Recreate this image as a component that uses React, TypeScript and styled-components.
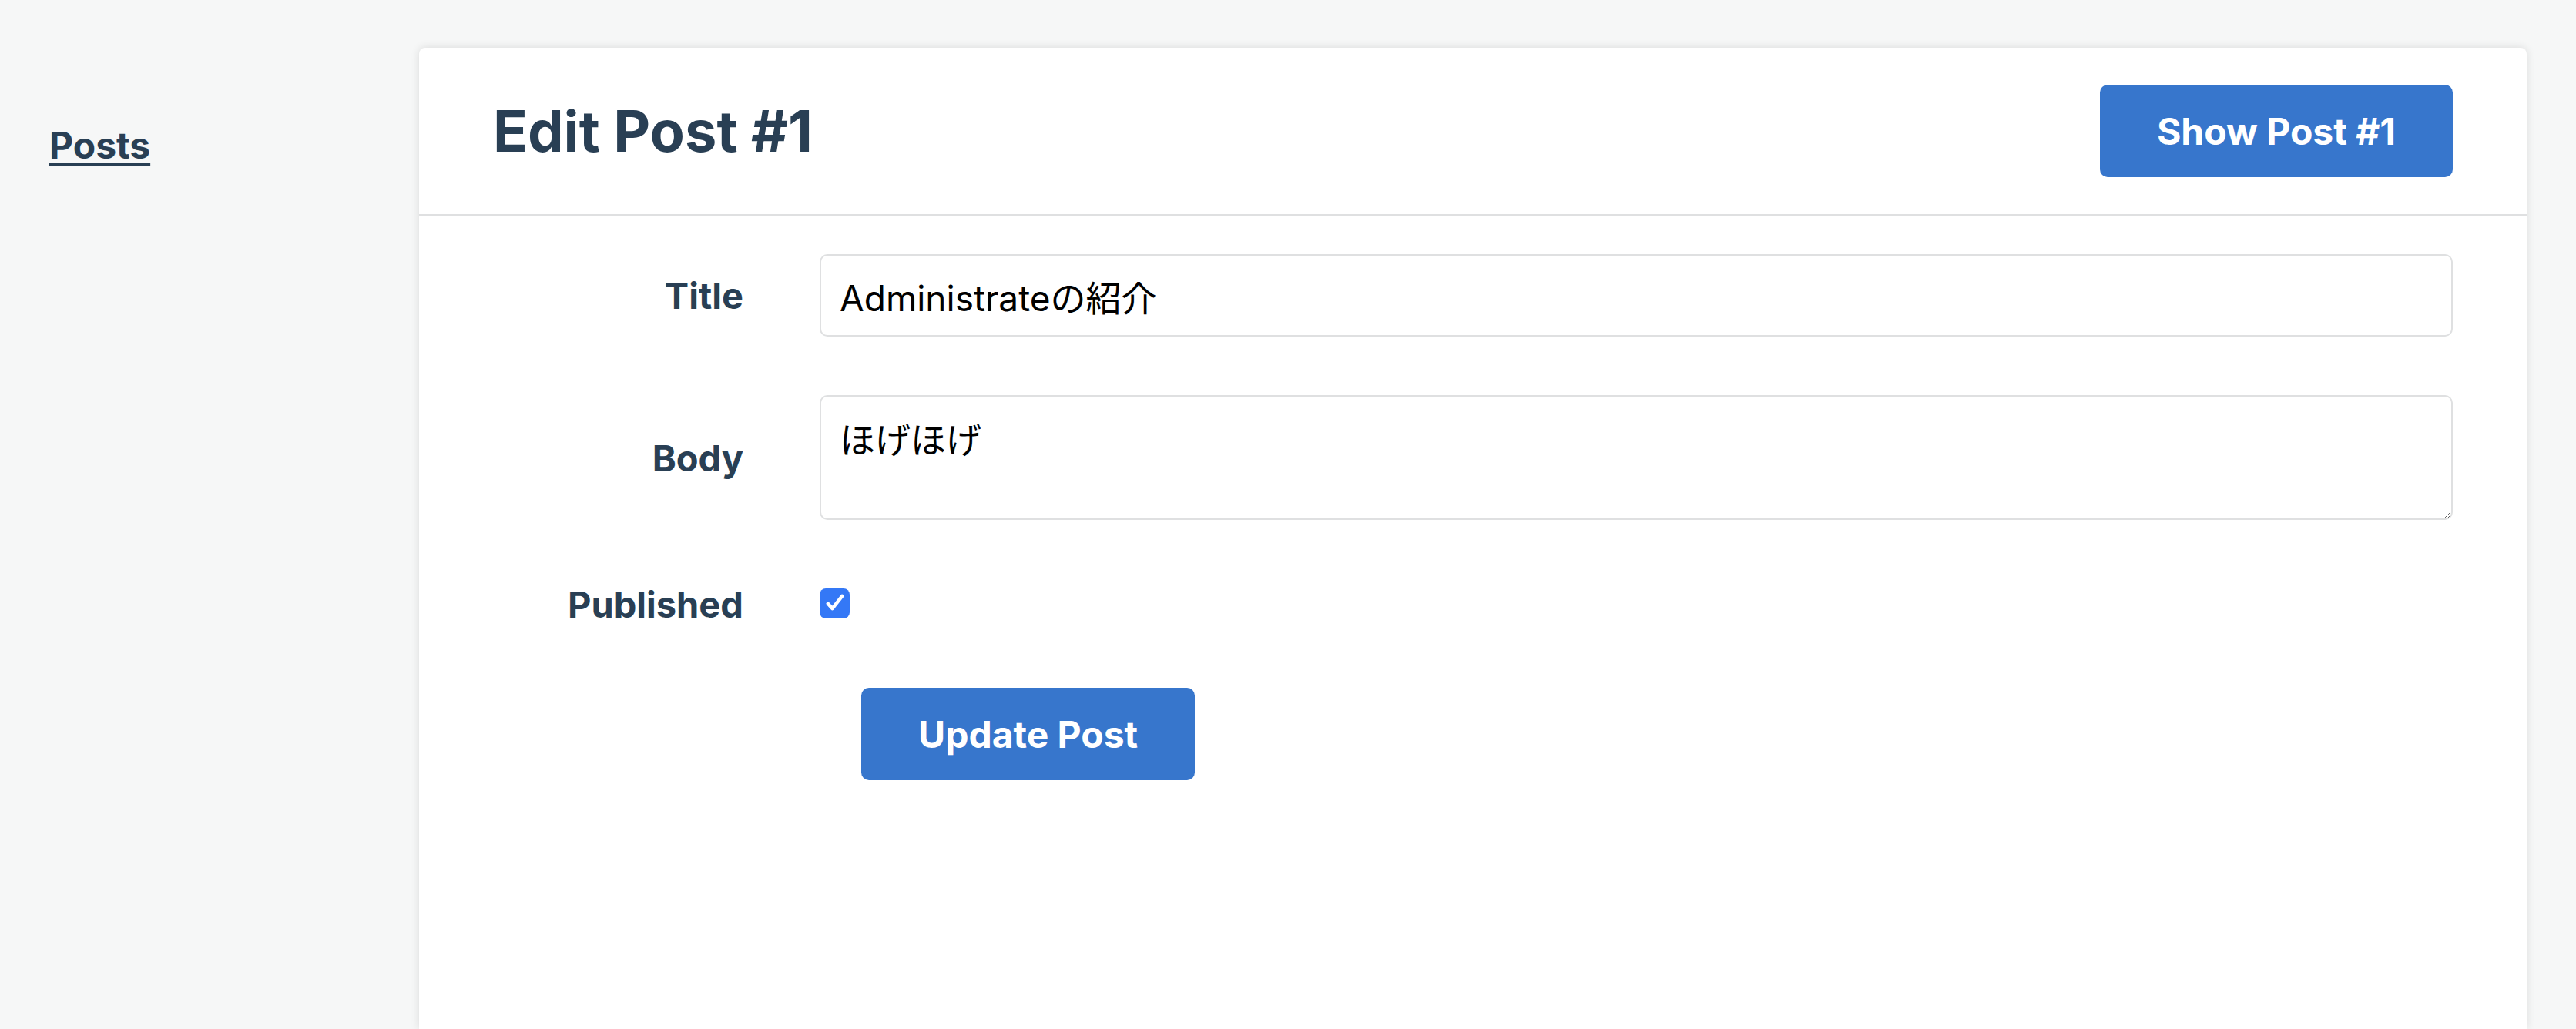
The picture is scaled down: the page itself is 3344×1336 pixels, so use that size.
import React from 'react';
import styled, { createGlobalStyle } from 'styled-components';

const FONT = `Inter, "Noto Sans CJK JP", sans-serif`;
const INK = '#293f54';
const BLUE = '#3776cc';
const LINE = '#dfe0e1';

const GlobalStyle = createGlobalStyle`
  * {
    box-sizing: border-box;
  }

  html,
  body {
    margin: 0;
    background: #f6f7f7;
  }

  body {
    font-family: ${FONT};
    color: ${INK};
  }
`;

const AppContainer = styled.div`
  display: flex;
  align-items: stretch;
  min-height: 1336px;
  padding: 62px 64px 0;
`;

const Navigation = styled.nav`
  flex: 0 0 480px;
  padding-top: 97px;
`;

const NavLink = styled.a`
  font-size: 48px;
  font-weight: 700;
  color: ${INK};
  text-decoration: underline;
  text-decoration-thickness: 4px;
  text-underline-offset: 6px;
`;

const MainContent = styled.main`
  flex: 1 1 auto;
  background: #fff;
  border-radius: 8px 8px 0 0;
  box-shadow: 0 0 12px rgba(0, 0, 0, 0.12);
`;

const Header = styled.header`
  display: flex;
  align-items: center;
  justify-content: space-between;
  height: 218px;
  padding: 0 96px;
  border-bottom: 2px solid ${LINE};
`;

const PageTitle = styled.h1`
  margin: 0;
  font-size: 74px;
  font-weight: 700;
  color: ${INK};
`;

const Button = styled.a`
  display: inline-flex;
  align-items: center;
  height: 120px;
  padding: 0 74px;
  border: none;
  border-radius: 10px;
  background: ${BLUE};
  color: #fff;
  font-family: ${FONT};
  font-size: 48px;
  font-weight: 700;
  text-decoration: none;
  cursor: pointer;
`;

const Form = styled.form`
  padding: 50px 96px 0;
`;

const FieldUnit = styled.div<{ $minHeight?: number }>`
  display: grid;
  grid-template-columns: 325px minmax(0, 1fr);
  column-gap: 99px;
  align-items: center;
  min-height: ${(p) => (p.$minHeight ? `${p.$minHeight}px` : 'auto')};
  margin-bottom: 76px;
`;

const Label = styled.label`
  text-align: right;
  font-size: 47px;
  font-weight: 700;
  color: ${INK};
`;

const TextInput = styled.input`
  width: 100%;
  height: 107px;
  padding: 0 24px;
  border: 2px solid ${LINE};
  border-radius: 10px;
  font-family: ${FONT};
  font-size: 46px;
  color: #000;
  outline: none;
`;

const TextArea = styled.textarea`
  display: block;
  width: 100%;
  height: 162px;
  padding: 20px 24px;
  border: 2px solid ${LINE};
  border-radius: 10px;
  font-family: ${FONT};
  font-size: 46px;
  color: #000;
  outline: none;
`;

const CheckBox = styled.span`
  display: inline-flex;
  align-items: center;
  justify-content: center;
  width: 39px;
  height: 39px;
  border-radius: 8px;
  background: #3478f6;
`;

const Actions = styled.div`
  grid-column: 2;
  padding-left: 54px;
`;

export default function App() {
  return (
    <>
      <GlobalStyle />
      <AppContainer>
        <Navigation>
          <NavLink href="#">Posts</NavLink>
        </Navigation>
        <MainContent>
          <Header>
            <PageTitle>Edit Post #1</PageTitle>
            <Button>Show Post #1</Button>
          </Header>
          <Form onSubmit={(e) => e.preventDefault()}>
            <FieldUnit>
              <Label htmlFor="post_title">Title</Label>
              <TextInput id="post_title" defaultValue="Administrateの紹介" />
            </FieldUnit>
            <FieldUnit>
              <Label htmlFor="post_body">Body</Label>
              <TextArea id="post_body" defaultValue="ほげほげ" />
            </FieldUnit>
            <FieldUnit $minHeight={66}>
              <Label>Published</Label>
              <div>
                <CheckBox>
                  <svg width="34" height="34" viewBox="0 0 24 24" fill="none">
                    <path d="M5.5 12.5l4 4.5L18.5 5.5" stroke="#fff" strokeWidth="3.2" strokeLinecap="round" strokeLinejoin="round" />
                  </svg>
                </CheckBox>
              </div>
            </FieldUnit>
            <FieldUnit>
              <Actions>
                <Button as="button" type="submit">
                  Update Post
                </Button>
              </Actions>
            </FieldUnit>
          </Form>
        </MainContent>
      </AppContainer>
    </>
  );
}
